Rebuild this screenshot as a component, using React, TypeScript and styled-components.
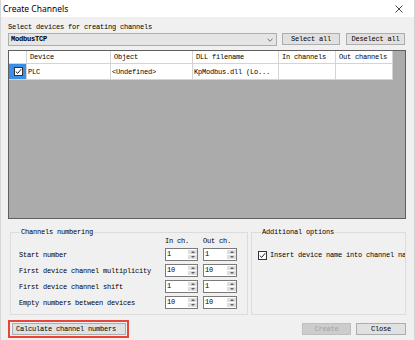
import React from "react";
import styled, { createGlobalStyle } from "styled-components";

const mono = `"Liberation Mono", "DejaVu Sans Mono", monospace`;

const GlobalStyle = createGlobalStyle`
  html, body {
    margin: 0;
    padding: 0;
    background: #ffffff;
  }
  * {
    box-sizing: border-box;
  }
`;

const Window = styled.div`
  width: 415px;
  height: 340px;
  display: flex;
  flex-direction: column;
  background: #f0f0f0;
  border-left: 1px solid #d4d4d4;
  border-right: 1px solid #d4d4d4;
  overflow: hidden;
  font-family: ${mono};
  font-size: 7px;
  letter-spacing: -0.2px;
  color: #000;
`;

const TitleBar = styled.div`
  height: 17px;
  flex: none;
  background: #ffffff;
  display: flex;
  align-items: center;
  justify-content: space-between;
  padding: 0 11px 0 2px;
`;

const Title = styled.span`
  font-family: "Noto Sans", "Open Sans", sans-serif;
  font-size: 8.5px;
  letter-spacing: 0;
  color: #000;
`;

const Body = styled.div`
  flex: 1;
  display: flex;
  flex-direction: column;
  padding: 5px 8px 0 7px;
`;

const Caption = styled.div`
  height: 10px;
  line-height: 10px;
  white-space: nowrap;
`;

const TopRow = styled.div`
  display: flex;
  height: 13px;
  margin-top: 1px;
`;

const Combo = styled.div`
  width: 269px;
  height: 13px;
  display: flex;
  align-items: center;
  justify-content: space-between;
  padding: 0 3px 0 2px;
  background: #e5e5e5;
  border: 1px solid #adadad;
  line-height: 11px;
  font-weight: bold;
`;

const Button = styled.div<{ $width: number; $gap?: number; $disabled?: boolean }>`
  width: ${(p) => p.$width}px;
  height: 12px;
  margin-left: ${(p) => p.$gap ?? 0}px;
  display: flex;
  align-items: center;
  justify-content: center;
  background: ${(p) => (p.$disabled ? "#cccccc" : "#e1e1e1")};
  border: 1px solid ${(p) => (p.$disabled ? "#bfbfbf" : "#adadad")};
  color: ${(p) => (p.$disabled ? "#a3a3a3" : "#000")};
  line-height: 10px;
  white-space: nowrap;
`;

const CalcButton = styled(Button)`
  justify-content: flex-start;
  padding-left: 3px;
`;

const Highlight = styled.div`
  border: 2px solid #e5463c;
  padding: 1px 1px 1px 2px;
`;

const Grid = styled.div`
  margin-top: 4px;
  height: 169px;
  border: 1px solid #5f5f5f;
  background: #ababab;
`;

const GridRow = styled.div<{ $height: number }>`
  display: grid;
  grid-template-columns: 18px 84px 82px 86px 57px 57px;
  width: 384px;
  height: ${(p) => p.$height}px;
`;

const Cell = styled.div<{ $selected?: boolean; $pad?: number }>`
  background: ${(p) => (p.$selected ? "#3a8ee6" : "#ffffff")};
  border-right: 1px solid #d4d4d4;
  border-bottom: 1px solid #d4d4d4;
  padding-left: ${(p) => p.$pad ?? 1}px;
  display: flex;
  align-items: center;
  justify-content: ${(p) => (p.$selected ? "center" : "flex-start")};
  white-space: nowrap;
  overflow: hidden;
  line-height: 10px;
`;

const GroupsRow = styled.div`
  display: flex;
  gap: 3px;
  margin: 9px 0 0 2px;
  height: 87px;
`;

const Group = styled.fieldset<{ $width: number }>`
  width: ${(p) => p.$width}px;
  margin: 0;
  border: 1px solid #dcdcdc;
  padding: 1px 0 4px 7px;
  min-width: 0;
  overflow: hidden;
`;

const Legend = styled.legend`
  padding: 0 1px;
  margin-left: 2px;
  height: 8px;
  line-height: 8px;
  white-space: nowrap;
  color: #000;
`;

const NumberGrid = styled.div`
  display: grid;
  grid-template-columns: 1fr 33px 34px;
  grid-template-rows: 8px repeat(4, 13px);
  column-gap: 5px;
  row-gap: 3px;
  padding-right: 10px;
  align-items: center;
`;

const RowLabel = styled.div`
  line-height: 10px;
  white-space: nowrap;
  padding-left: 1px;
`;

const ColHead = styled.div`
  line-height: 8px;
  white-space: nowrap;
`;

const SpinBox = styled.div`
  height: 13px;
  display: flex;
  background: #ffffff;
  border: 1px solid #7a7a7a;
`;

const SpinValue = styled.div`
  flex: 1;
  padding-left: 1px;
  line-height: 11px;
`;

const SpinButtons = styled.div`
  width: 9px;
  display: flex;
  flex-direction: column;
  gap: 1px;
  padding: 1px 0 1px 0;
  background: #ffffff;
`;

const SpinHalf = styled.div<{ $down?: boolean }>`
  flex: 1;
  background: #dedede;
  display: flex;
  align-items: center;
  justify-content: center;

  &::after {
    content: "";
    border-left: 2px solid transparent;
    border-right: 2px solid transparent;
    ${(p) =>
      p.$down
        ? "border-top: 2px solid #606060;"
        : "border-bottom: 2px solid #606060;"}
  }
`;

const OptionRow = styled.div`
  display: flex;
  align-items: center;
  gap: 3px;
  margin-top: 13px;
  margin-left: -1px;
  white-space: nowrap;
  line-height: 10px;
`;

const Box = styled.div`
  width: 9px;
  height: 9px;
  flex: none;
  background: #ffffff;
  border: 1px solid #333333;
  display: flex;
  align-items: center;
  justify-content: center;
`;

const BottomRow = styled.div`
  display: flex;
  align-items: center;
  margin-top: 5px;
  height: 18px;
`;

const Spacer = styled.div`
  flex: 1;
`;

const Check = () => (
  <Box>
    <svg width="7" height="7" viewBox="0 0 7 7">
      <polyline points="0.8,3.6 2.7,5.4 6.2,1.2" fill="none" stroke="#222" strokeWidth="1" />
    </svg>
  </Box>
);

const Spin = ({ value }: { value: string }) => (
  <SpinBox>
    <SpinValue>{value}</SpinValue>
    <SpinButtons>
      <SpinHalf />
      <SpinHalf $down />
    </SpinButtons>
  </SpinBox>
);

const rows = [
  { label: "Start number", inCh: "1", outCh: "1" },
  { label: "First device channel multiplicity", inCh: "10", outCh: "10" },
  { label: "First device channel shift", inCh: "1", outCh: "1" },
  { label: "Empty numbers between devices", inCh: "10", outCh: "10" },
];

const headers = ["Device", "Object", "DLL filename", "In channels", "Out channels"];

export default function App() {
  return (
    <>
      <GlobalStyle />
      <Window>
        <TitleBar>
          <Title>Create Channels</Title>
          <svg width="8" height="8" viewBox="0 0 8 8">
            <path d="M0.5 0.5 L7.5 7.5 M7.5 0.5 L0.5 7.5" stroke="#333" strokeWidth="0.9" />
          </svg>
        </TitleBar>
        <Body>
          <Caption>Select devices for creating channels</Caption>
          <TopRow>
            <Combo>
              <span>ModbusTCP</span>
              <svg width="6" height="4" viewBox="0 0 6 4">
                <polyline points="0.5,0.8 3,3.2 5.5,0.8" fill="none" stroke="#555" strokeWidth="0.8" />
              </svg>
            </Combo>
            <Button $width={58} $gap={5}>Select all</Button>
            <Button $width={59} $gap={6}>Deselect all</Button>
          </TopRow>
          <Grid>
            <GridRow $height={13}>
              <Cell />
              {headers.map((h) => (
                <Cell key={h} $pad={3}>
                  {h}
                </Cell>
              ))}
            </GridRow>
            <GridRow $height={16}>
              <Cell $selected>
                <Check />
              </Cell>
              <Cell>PLC</Cell>
              <Cell>&lt;Undefined&gt;</Cell>
              <Cell>KpModbus.dll (Lo...</Cell>
              <Cell />
              <Cell />
            </GridRow>
          </Grid>
          <GroupsRow>
            <Group $width={238}>
              <Legend>Channels numbering</Legend>
              <NumberGrid>
                <span />
                <ColHead>In ch.</ColHead>
                <ColHead>Out ch.</ColHead>
                {rows.map((r) => (
                  <React.Fragment key={r.label}>
                    <RowLabel>{r.label}</RowLabel>
                    <Spin value={r.inCh} />
                    <Spin value={r.outCh} />
                  </React.Fragment>
                ))}
              </NumberGrid>
            </Group>
            <Group $width={155}>
              <Legend>Additional options</Legend>
              <OptionRow>
                <Check />
                <span>Insert device name into channel names</span>
              </OptionRow>
            </Group>
          </GroupsRow>
          <BottomRow>
            <Highlight>
              <CalcButton $width={114}>Calculate channel numbers</CalcButton>
            </Highlight>
            <Spacer />
            <Button $width={49} $disabled>Create</Button>
            <Button $width={50} $gap={5}>Close</Button>
          </BottomRow>
        </Body>
      </Window>
    </>
  );
}
